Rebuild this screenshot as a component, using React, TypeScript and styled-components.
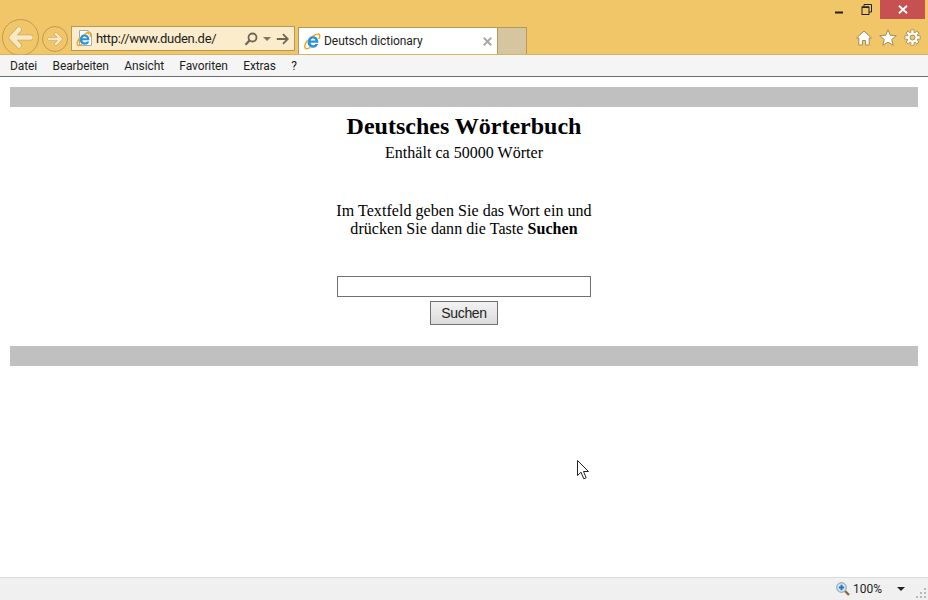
import React from "react";
import styled, { createGlobalStyle } from "styled-components";

const Global = createGlobalStyle`
  html, body { margin: 0; padding: 0; height: 100%; background: #fff; overflow: hidden; }
  #root { height: 100%; }
  * { box-sizing: border-box; }
`;

const Win = styled.div`
  position: relative;
  width: 928px;
  height: 600px;
  display: flex;
  flex-direction: column;
  font-family: Roboto, "Noto Sans", sans-serif;
`;

const Chrome = styled.header`
  height: 55px;
  background: #f0c668;
  border-bottom: 1px solid #d7b468;
  display: flex;
  flex-direction: column;
  flex: none;
`;

const Caption = styled.div`
  height: 20px;
  display: flex;
  justify-content: flex-end;
  padding-right: 3px;
  flex: none;
`;

const CapBtn = styled.div<{ $w: number; $bg?: string }>`
  width: ${(p) => p.$w}px;
  height: 19px;
  display: flex;
  align-items: center;
  justify-content: center;
  background: ${(p) => p.$bg ?? "transparent"};
`;

const MinGlyph = styled.svg`
  margin-top: 6px;
`;

const NavRow = styled.div`
  flex: 1;
  display: flex;
  align-items: flex-end;
  padding-left: 2px;
  min-height: 0;
`;

const RoundBack = styled.div`
  width: 37px;
  height: 37px;
  margin-bottom: -2px;
  border-radius: 50%;
  border: 1px solid #bd9c55;
  display: flex;
  align-items: center;
  justify-content: center;
  flex: none;
  overflow: hidden;
`;

const RoundForward = styled.div`
  width: 26px;
  height: 26px;
  margin: 0 3px 2px 3px;
  border-radius: 50%;
  border: 1px solid #bd9c55;
  display: flex;
  align-items: center;
  justify-content: center;
  flex: none;
`;

const Address = styled.div`
  width: 224px;
  height: 25px;
  margin-bottom: 3px;
  background: #fbeccb;
  border: 1px solid #b39a5c;
  display: flex;
  align-items: center;
  padding: 0 5px 0 4px;
  flex: none;
`;

const Url = styled.span`
  font-size: 13px;
  letter-spacing: -0.3px;
  color: #1c1c1c;
  margin-left: 3px;
  flex: 1;
  white-space: nowrap;
`;

const AddrTools = styled.div`
  display: flex;
  align-items: center;
  gap: 5px;
`;

const Tab = styled.div`
  width: 200px;
  height: 27px;
  margin-left: 3px;
  background: #fff;
  border: 1px solid #b39a5c;
  border-bottom: none;
  display: flex;
  align-items: center;
  padding: 0 5px 0 5px;
  flex: none;
`;

const TabTitle = styled.span`
  font-size: 12px;
  letter-spacing: -0.05px;
  color: #1c1c1c;
  margin-left: 3px;
  flex: 1;
  white-space: nowrap;
`;

const NewTab = styled.div`
  width: 29px;
  height: 27px;
  background: #d6c6a0;
  border: 1px solid #b39a5c;
  border-bottom: none;
  border-left: none;
  flex: none;
`;

const Spacer = styled.div`
  flex: 1;
`;

const Tools = styled.div`
  display: flex;
  align-items: center;
  gap: 7px;
  height: 27px;
  margin-right: 7px;
  padding-bottom: 6px;
`;

const MenuBar = styled.nav`
  height: 22px;
  background: #f5f5f5;
  border-bottom: 1px solid #6d6d6d;
  display: flex;
  align-items: center;
  padding-left: 10px;
  gap: 15.4px;
  flex: none;
`;

const MenuItem = styled.span`
  font-size: 12px;
  letter-spacing: -0.1px;
  color: #1e1e1e;
`;

const Main = styled.main`
  flex: 1;
  padding: 10px;
  font-family: "Liberation Serif", serif;
  color: #000;
  text-align: center;
`;

const Rule = styled.div`
  height: 20px;
  background: #c0c0c0;
`;

const Title = styled.h1`
  margin: 5px 0 0;
  font-size: 24px;
  line-height: 28px;
  font-weight: bold;
`;

const Sub = styled.p`
  margin: 4px 0 0;
  font-size: 16px;
  line-height: 18px;
  letter-spacing: 0.03px;
`;

const Intro = styled.p`
  margin: 40px 0 0;
  font-size: 16px;
  line-height: 18px;
  letter-spacing: 0.05px;
`;

const Form = styled.form`
  margin: 38px 0 21px;
  display: flex;
  flex-direction: column;
  align-items: center;
  gap: 4px;
`;

const Field = styled.input`
  width: 254px;
  height: 21px;
  border: 1px solid #707070;
  background: #fff;
  padding: 0 2px;
  outline: none;
  display: block;
`;

const Submit = styled.button`
  width: 68px;
  height: 24px;
  border: 1px solid #707070;
  background: linear-gradient(#f2f2f2, #dcdcdc);
  font-family: "Liberation Sans", Arial, sans-serif;
  font-size: 14px;
  letter-spacing: -0.3px;
  color: #222;
  padding: 0;
`;

const Status = styled.footer`
  height: 23px;
  background: #f0f0f0;
  border-top: 1px solid #dcdcdc;
  display: flex;
  align-items: center;
  justify-content: flex-end;
  flex: none;
`;

const Zoom = styled.span`
  font-size: 12px;
  color: #1e1e1e;
  margin-left: 3px;
`;

const Caret = styled.div`
  width: 0;
  height: 0;
  border-left: 4px solid transparent;
  border-right: 4px solid transparent;
  border-top: 4px solid #222;
  margin: 0 23px 0 15px;
`;

const Grip = styled.svg`
  position: absolute;
  right: 1px;
  bottom: 1px;
`;

const Cursor = styled.svg`
  position: absolute;
  left: 577px;
  top: 460px;
`;

const Glyph = styled.svg`
  flex: none;
`;

const IeMark = () => (
  <>
    <path d="M8.800 3c3.100 0 5.500 2.400 5.500 5.800v1H6.600c.2 1.500 1.200 2.400 2.600 2.400 1 0 1.700-.4 2.200-1.200h2.800c-.8 2.400-2.700 3.700-5.100 3.700-3.100 0-5.500-2.400-5.500-5.500S5.800 3 8.800 3zM6.700 7.600h4.700c-.2-1.200-1.100-2-2.300-2S6.900 6.400 6.700 7.600z" fill="#2b93dc" />
    <path d="M14.900 6C16.300 3 16 .9 13.900 1.100c-1.600.1-3.500 1-5.300 2.300M3.600 7.200C1.300 10.200.2 13.200 1.100 14.900c.7 1.200 3 .8 5.300-.5" fill="none" stroke="#f0aa1c" strokeWidth="1.500" />
  </>
);

const TabIcon = () => (
  <Glyph width="17" height="17" viewBox="0 0 17 17">
    <IeMark />
  </Glyph>
);

const PageIcon = () => (
  <Glyph width="17" height="17" viewBox="0 0 17 17">
    <path d="M3.500.5H12L15.500 4V15.500H3.500z" fill="#fff" stroke="#a9a9a9" />
    <path d="M12 .5V4h3.500" fill="#e6e6e6" stroke="#a9a9a9" />
    <g transform="translate(0.5 1.500) scale(0.9)">
      <IeMark />
    </g>
  </Glyph>
);

const Home = () => (
  <svg width="16" height="16" viewBox="0 0 16 16">
    <path d="M8 1 15.500 8h-2.300v7H9.600v-4.500H6.400V15H2.800V8H.5z" fill="#fff" stroke="#a58c55" strokeWidth="1" strokeLinejoin="round" />
  </svg>
);

const Star = () => (
  <svg width="18" height="17" viewBox="0 0 18 17">
    <path d="M9 .8 11.300 6.300l6 .4-4.600 3.800 1.500 5.800L9 13.200l-5.200 3.100 1.500-5.800L.7 6.700l6-.4z" fill="#fff" stroke="#a58c55" strokeWidth="1" strokeLinejoin="round" />
  </svg>
);

const Gear = () => (
  <svg width="17" height="17" viewBox="0 0 17 17">
    <g stroke="#a58c55" strokeWidth="3.800">
      <path d="M8.500.5v16M.5 8.500h16M2.800 2.800l11.400 11.400M14.200 2.800 2.800 14.200" />
    </g>
    <g stroke="#fff" strokeWidth="2.400">
      <path d="M8.500 1.300v14.400M1.300 8.500h14.400M3.400 3.400l10.200 10.200M13.600 3.400 3.400 13.600" />
    </g>
    <circle cx="8.500" cy="8.500" r="4.800" fill="#fff" />
    <circle cx="8.500" cy="8.500" r="2.500" fill="#f0c668" stroke="#a58c55" strokeWidth="1" />
  </svg>
);

export default function App() {
  const menus = ["Datei", "Bearbeiten", "Ansicht", "Favoriten", "Extras", "?"];
  return (
    <Win>
      <Global />
      <Chrome>
        <Caption>
          <CapBtn $w={27}>
            <MinGlyph width="9" height="3" viewBox="0 0 9 3"><rect y="0.500" width="8" height="2" fill="#222" /></MinGlyph>
          </CapBtn>
          <CapBtn $w={27}>
            <svg width="11" height="11" viewBox="0 0 11 11">
              <path d="M3 2.500V.5h7.500v7.500H8" fill="none" stroke="#222" />
              <rect x="1" y="3" width="7" height="7.500" fill="none" stroke="#222" />
              <rect x="1" y="2.500" width="7" height="1.500" fill="#222" />
            </svg>
          </CapBtn>
          <CapBtn $w={45} $bg="#c75050">
            <svg width="10" height="9" viewBox="0 0 10 9">
              <path d="M1 .8 9 8.200M9 .8 1 8.200" stroke="#fff" strokeWidth="1.900" />
            </svg>
          </CapBtn>
        </Caption>
        <NavRow>
          <RoundBack>
            <svg width="25" height="23" viewBox="0 0 25 23">
              <path d="M11 3.500 3.500 11.500 11 19.500M4.500 11.500H22.500" fill="none" stroke="#c9a864" strokeWidth="5.800" strokeLinejoin="round" strokeLinecap="round" />
              <path d="M11 3.500 3.500 11.500 11 19.500M4.500 11.500H22.500" fill="none" stroke="#f9e8c2" strokeWidth="4.600" strokeLinejoin="round" strokeLinecap="round" />
            </svg>
          </RoundBack>
          <RoundForward>
            <svg width="16" height="14" viewBox="0 0 16 14">
              <path d="M9 2 13.800 7 9 12M13 7H2" fill="none" stroke="#c9a864" strokeWidth="3.400" strokeLinecap="round" strokeLinejoin="round" />
              <path d="M9 2 13.800 7 9 12M13 7H2" fill="none" stroke="#f9e8c2" strokeWidth="2.500" strokeLinecap="round" strokeLinejoin="round" />
            </svg>
          </RoundForward>
          <Address>
            <PageIcon />
            <Url>http://www.duden.de/</Url>
            <AddrTools>
              <svg width="14" height="14" viewBox="0 0 14 14">
                <circle cx="8.500" cy="5.500" r="4" fill="none" stroke="#6e6656" strokeWidth="1.800" />
                <path d="M5.500 8.500 1.500 12.800" stroke="#6e6656" strokeWidth="2.200" />
              </svg>
              <svg width="8" height="4" viewBox="0 0 8 4"><path d="M0 0h8L4 4z" fill="#7d7565" /></svg>
              <svg width="13" height="12" viewBox="0 0 13 12">
                <path d="M7 1.200 11.800 6 7 10.800M11 6H.8" fill="none" stroke="#6e6656" strokeWidth="1.800" />
              </svg>
            </AddrTools>
          </Address>
          <Tab>
            <TabIcon />
            <TabTitle>Deutsch dictionary</TabTitle>
            <svg width="9" height="9" viewBox="0 0 9 9">
              <path d="M.8.8 8.200 8.200M8.200.8.800 8.200" stroke="#a8a8a8" strokeWidth="2" />
            </svg>
          </Tab>
          <NewTab />
          <Spacer />
          <Tools>
            <Home />
            <Star />
            <Gear />
          </Tools>
        </NavRow>
      </Chrome>
      <MenuBar>
        {menus.map((m) => (
          <MenuItem key={m}>{m}</MenuItem>
        ))}
      </MenuBar>
      <Main>
        <Rule />
        <Title>Deutsches Wörterbuch</Title>
        <Sub>Enthält ca 50000 Wörter</Sub>
        <Intro>
          Im Textfeld geben Sie das Wort ein und
          <br />
          drücken Sie dann die Taste <b>Suchen</b>
        </Intro>
        <Form onSubmit={(e) => e.preventDefault()}>
          <Field type="text" />
          <Submit type="submit">Suchen</Submit>
        </Form>
        <Rule />
      </Main>
      <Status>
        <svg width="14" height="14" viewBox="0 0 14 14">
          <path d="M9 9l4 4" stroke="#8a6a3c" strokeWidth="2.400" />
          <circle cx="5.500" cy="5.500" r="4.800" fill="#dbe9f6" stroke="#7f93a8" />
          <path d="M2.800 5.500h5.400M5.500 2.800v5.400" stroke="#1f78c8" strokeWidth="2" />
        </svg>
        <Zoom>100%</Zoom>
        <Caret />
      </Status>
      <Grip width="11" height="11" viewBox="0 0 11 11">
        <path d="M8 0h2v2H8zM4 4h2v2H4zM8 4h2v2H8zM0 8h2v2H0zM4 8h2v2H4zM8 8h2v2H8z" fill="#b8b8b8" />
      </Grip>
      <Cursor width="13" height="20" viewBox="0 0 13 20">
        <path d="M.5.5V15.500L4 12.200 6.800 18.800 9.200 17.800 6.500 11.500H11.500z" fill="#fff" stroke="#222" strokeWidth="1" />
      </Cursor>
    </Win>
  );
}
